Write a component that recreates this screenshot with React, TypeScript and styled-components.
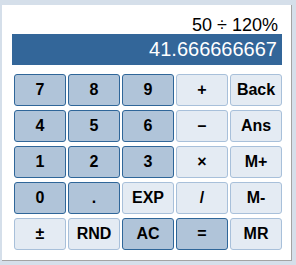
import React from 'react';
import styled, { createGlobalStyle } from 'styled-components';

const GlobalStyle = createGlobalStyle`
  html, body {
    margin: 0;
    padding: 0;
    background: #d5dfea;
  }
  body {
    font-family: 'Liberation Sans', Arial, sans-serif;
  }
`;

type Kind = 'dark' | 'light';

interface Key {
  label: string;
  kind: Kind;
}

const keys: Key[] = [
  { label: '7', kind: 'dark' },
  { label: '8', kind: 'dark' },
  { label: '9', kind: 'dark' },
  { label: '+', kind: 'light' },
  { label: 'Back', kind: 'light' },
  { label: '4', kind: 'dark' },
  { label: '5', kind: 'dark' },
  { label: '6', kind: 'dark' },
  { label: '–', kind: 'light' },
  { label: 'Ans', kind: 'light' },
  { label: '1', kind: 'dark' },
  { label: '2', kind: 'dark' },
  { label: '3', kind: 'dark' },
  { label: '×', kind: 'light' },
  { label: 'M+', kind: 'light' },
  { label: '0', kind: 'dark' },
  { label: '.', kind: 'dark' },
  { label: 'EXP', kind: 'light' },
  { label: '/', kind: 'light' },
  { label: 'M-', kind: 'light' },
  { label: '±', kind: 'light' },
  { label: 'RND', kind: 'light' },
  { label: 'AC', kind: 'dark' },
  { label: '=', kind: 'dark' },
  { label: 'MR', kind: 'light' },
];

export default function App() {
  return (
    <>
      <GlobalStyle />
      <Page>
        <Panel>
          <Expression>50 ÷ 120%</Expression>
          <Result>41.666666667</Result>
          <Keypad>
            {keys.map((k, i) => (
              <KeyButton key={i} $kind={k.kind}>
                {k.label}
              </KeyButton>
            ))}
          </Keypad>
        </Panel>
      </Page>
    </>
  );
}

const Page = styled.div`
  padding: 5px 0 0 2px;
  height: 265px;
  box-sizing: border-box;
`;

const Panel = styled.div`
  box-sizing: border-box;
  width: 290px;
  height: 256px;
  padding: 0 9px 0 10px;
  background: #ffffff;
  border-right: 1px solid #a3a3a3;
  border-bottom: 1px solid #a3a3a3;
  display: flex;
  flex-direction: column;
`;

const Expression = styled.div`
  height: 29px;
  padding-right: 4px;
  display: flex;
  align-items: flex-end;
  justify-content: flex-end;
  font-size: 18px;
  line-height: 18px;
  color: #000;
`;

const Result = styled.div`
  height: 31px;
  padding-right: 5px;
  background: #336699;
  color: #ffffff;
  font-size: 20px;
  line-height: 31px;
  text-align: right;
`;

const Keypad = styled.div`
  margin-top: 9px;
  padding: 0 2px;
  display: grid;
  grid-template-columns: repeat(5, 52px);
  grid-auto-rows: 32px;
  column-gap: 2px;
  row-gap: 4px;
`;

const KeyButton = styled.button<{ $kind: Kind }>`
  box-sizing: border-box;
  margin: 0;
  padding: 0;
  font-family: 'Liberation Sans', Arial, sans-serif;
  font-size: 16px;
  font-weight: bold;
  color: #000;
  border-radius: 3px;
  border: 1px solid ${({ $kind }) => ($kind === 'dark' ? '#2f6699' : '#a8c0da')};
  background: ${({ $kind }) => ($kind === 'dark' ? '#b0c4d9' : '#e4ebf3')};
  cursor: pointer;
`;
